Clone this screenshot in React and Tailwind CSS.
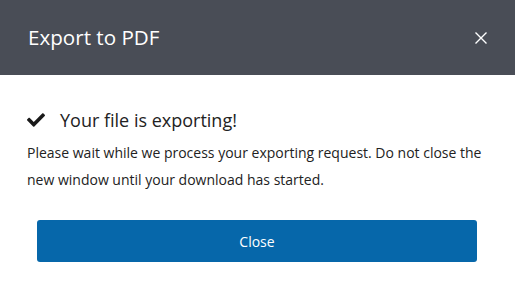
import React from 'react';
import { FaCheck } from 'react-icons/fa';

const App = () => {
    return (
        <div className="w-[515px] h-[290px] bg-white font-['Open_Sans',sans-serif] overflow-hidden">
            {/* Header */}
            <div className="h-[75px] bg-[#494d56] flex items-center justify-between pl-7 pr-[28px]">
                <h2 className="text-[20.6px] text-white leading-none">Export to PDF</h2>
                <button className="text-white p-0">
                    <svg width="12" height="12" viewBox="0 0 12 12" fill="none" stroke="white" strokeWidth="1.4">
                        <path d="M0.5 0.5 L11.5 11.5 M11.5 0.5 L0.5 11.5" />
                    </svg>
                </button>
            </div>

            {/* Body */}
            <div className="pl-[27px] pr-6 pt-[33px]">
                <div className="flex items-center gap-[15px] h-[24px]">
                    <FaCheck className="text-[#1a1a1a] w-[18px] h-[18px]" />
                    <span className="text-[18px] text-[#222]">Your file is exporting!</span>
                </div>
                <p className="mt-[7px] text-[14px] leading-[27px] text-[#222]">
                    Please wait while we process your exporting request. Do not close the new window until your download has started.
                </p>
            </div>

            <div className="pl-[37px] pr-[38px] mt-[27px]">
                <button className="w-full h-[42px] bg-[#0667aa] rounded-[3px] text-white text-[14px]">
                    Close
                </button>
            </div>
        </div>
    );
};

export default App;
